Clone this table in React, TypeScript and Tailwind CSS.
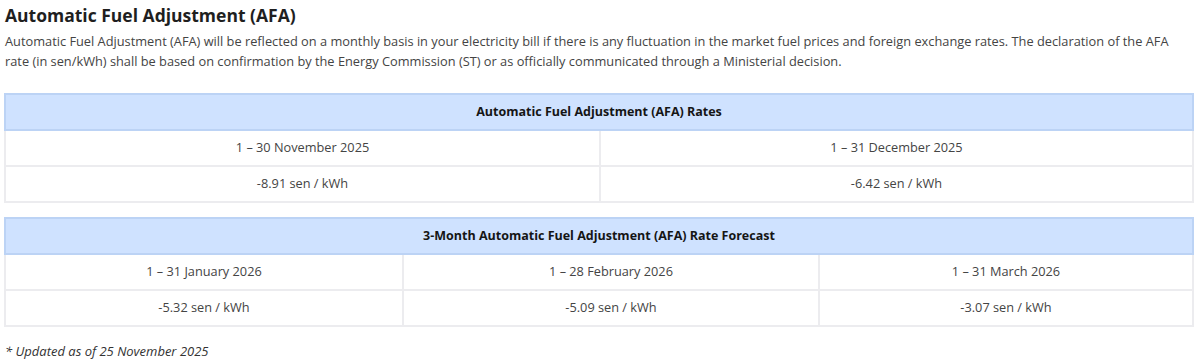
import React from 'react'

const font = { fontFamily: '"Open Sans", "Liberation Sans", sans-serif' }

const current = [
  { period: '1 – 30 November 2025', rate: '-8.91 sen / kWh' },
  { period: '1 – 31 December 2025', rate: '-6.42 sen / kWh' },
]

const forecast = [
  { period: '1 – 31 January 2026', rate: '-5.32 sen / kWh' },
  { period: '1 – 28 February 2026', rate: '-5.09 sen / kWh' },
  { period: '1 – 31 March 2026', rate: '-3.07 sen / kWh' },
]

const cell = 'h-[36px] border-2 border-[#ececef] text-center align-middle text-[12.75px] text-[#444]'
const head = 'h-[36px] border-2 border-[#bcd3f5] bg-[#cfe2ff] text-center align-middle text-[12.5px] font-bold text-[#151515]'

export default function App() {
  return (
    <div className="bg-white px-[4px] pt-[2px] w-[1200px] h-[364px] overflow-hidden" style={font}>
      <h2 className="pl-[1px] text-[17.5px] font-bold leading-[26px] text-[#1f1f1f]">Automatic Fuel Adjustment (AFA)</h2>
      <p className="mt-[3px] pl-[1px] pr-[20px] text-[12.8px] leading-[20px] text-[#444]">
        Automatic Fuel Adjustment (AFA) will be reflected on a monthly basis in your electricity bill if there is any fluctuation in the market fuel prices and foreign exchange rates. The declaration of the AFA rate (in sen/kWh) shall be based on confirmation by the Energy Commission (ST) or as officially communicated through a Ministerial decision.
      </p>

      {/* Current rates */}
      <table className="mt-[22px] w-[1190px] border-collapse table-fixed">
        <colgroup>
          <col className="w-[595px]" />
          <col />
        </colgroup>
        <thead>
          <tr>
            <th colSpan={2} className={head}>Automatic Fuel Adjustment (AFA) Rates</th>
          </tr>
        </thead>
        <tbody>
          <tr>
            {current.map(c => (
              <td key={c.period} className={cell}>{c.period}</td>
            ))}
          </tr>
          <tr>
            {current.map(c => (
              <td key={c.rate} className={cell}>{c.rate}</td>
            ))}
          </tr>
        </tbody>
      </table>

      {/* Forecast */}
      <table className="mt-[14px] w-[1190px] border-collapse table-fixed">
        <colgroup>
          <col className="w-[398px]" />
          <col className="w-[416px]" />
          <col />
        </colgroup>
        <thead>
          <tr>
            <th colSpan={3} className={head}>3-Month Automatic Fuel Adjustment (AFA) Rate Forecast</th>
          </tr>
        </thead>
        <tbody>
          <tr>
            {forecast.map(c => (
              <td key={c.period} className={cell}>{c.period}</td>
            ))}
          </tr>
          <tr>
            {forecast.map(c => (
              <td key={c.rate} className={cell}>{c.rate}</td>
            ))}
          </tr>
        </tbody>
      </table>

      <p className="mt-[15px] pl-[1px] text-[13px] italic text-[#333]">* Updated as of 25 November 2025</p>
    </div>
  )
}
